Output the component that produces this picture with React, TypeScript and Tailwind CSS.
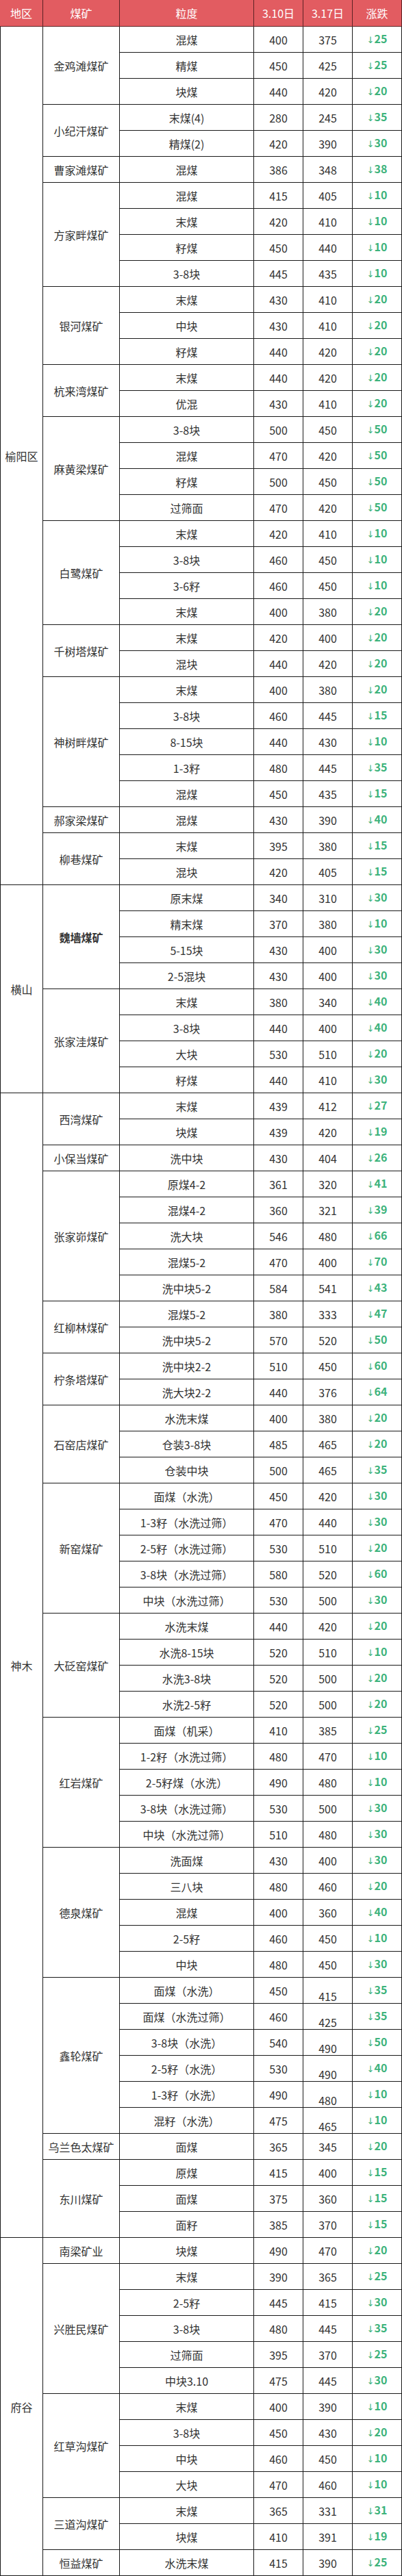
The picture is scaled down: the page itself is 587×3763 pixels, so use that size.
type Row = [string, number, number, number, boolean?];
type Mine = { name: string; bold?: boolean; rows: Row[] };
type Region = { name: string; mines: Mine[] };

const DATA: Region[] = [
  {
    name: "榆阳区",
    mines: [
      { name: "金鸡滩煤矿", rows: [["混煤", 400, 375, 25], ["精煤", 450, 425, 25], ["块煤", 440, 420, 20]] },
      { name: "小纪汗煤矿", rows: [["末煤(4)", 280, 245, 35], ["精煤(2)", 420, 390, 30]] },
      { name: "曹家滩煤矿", rows: [["混煤", 386, 348, 38]] },
      {
        name: "方家畔煤矿",
        rows: [["混煤", 415, 405, 10], ["末煤", 420, 410, 10], ["籽煤", 450, 440, 10], ["3-8块", 445, 435, 10]],
      },
      { name: "银河煤矿", rows: [["末煤", 430, 410, 20], ["中块", 430, 410, 20], ["籽煤", 440, 420, 20]] },
      { name: "杭来湾煤矿", rows: [["末煤", 440, 420, 20], ["优混", 430, 410, 20]] },
      {
        name: "麻黄梁煤矿",
        rows: [["3-8块", 500, 450, 50], ["混煤", 470, 420, 50], ["籽煤", 500, 450, 50], ["过筛面", 470, 420, 50]],
      },
      {
        name: "白鹭煤矿",
        rows: [["末煤", 420, 410, 10], ["3-8块", 460, 450, 10], ["3-6籽", 460, 450, 10], ["末煤", 400, 380, 20]],
      },
      { name: "千树塔煤矿", rows: [["末煤", 420, 400, 20], ["混块", 440, 420, 20]] },
      {
        name: "神树畔煤矿",
        rows: [
          ["末煤", 400, 380, 20],
          ["3-8块", 460, 445, 15],
          ["8-15块", 440, 430, 10],
          ["1-3籽", 480, 445, 35],
          ["混煤", 450, 435, 15],
        ],
      },
      { name: "郝家梁煤矿", rows: [["混煤", 430, 390, 40]] },
      { name: "柳巷煤矿", rows: [["末煤", 395, 380, 15], ["混块", 420, 405, 15]] },
    ],
  },
  {
    name: "横山",
    mines: [
      {
        name: "魏墙煤矿",
        bold: true,
        rows: [["原末煤", 340, 310, 30], ["精末煤", 370, 380, 10], ["5-15块", 430, 400, 30], ["2-5混块", 430, 400, 30]],
      },
      {
        name: "张家洼煤矿",
        rows: [["末煤", 380, 340, 40], ["3-8块", 440, 400, 40], ["大块", 530, 510, 20], ["籽煤", 440, 410, 30]],
      },
    ],
  },
  {
    name: "神木",
    mines: [
      { name: "西湾煤矿", rows: [["末煤", 439, 412, 27], ["块煤", 439, 420, 19]] },
      { name: "小保当煤矿", rows: [["洗中块", 430, 404, 26]] },
      {
        name: "张家峁煤矿",
        rows: [
          ["原煤4-2", 361, 320, 41],
          ["混煤4-2", 360, 321, 39],
          ["洗大块", 546, 480, 66],
          ["混煤5-2", 470, 400, 70],
          ["洗中块5-2", 584, 541, 43],
        ],
      },
      { name: "红柳林煤矿", rows: [["混煤5-2", 380, 333, 47], ["洗中块5-2", 570, 520, 50]] },
      { name: "柠条塔煤矿", rows: [["洗中块2-2", 510, 450, 60], ["洗大块2-2", 440, 376, 64]] },
      { name: "石窑店煤矿", rows: [["水洗末煤", 400, 380, 20], ["仓装3-8块", 485, 465, 20], ["仓装中块", 500, 465, 35]] },
      {
        name: "新窑煤矿",
        rows: [
          ["面煤（水洗）", 450, 420, 30],
          ["1-3籽（水洗过筛）", 470, 440, 30],
          ["2-5籽（水洗过筛）", 530, 510, 20],
          ["3-8块（水洗过筛）", 580, 520, 60],
          ["中块（水洗过筛）", 530, 500, 30],
        ],
      },
      {
        name: "大砭窑煤矿",
        rows: [["水洗末煤", 440, 420, 20], ["水洗8-15块", 520, 510, 10], ["水洗3-8块", 520, 500, 20], ["水洗2-5籽", 520, 500, 20]],
      },
      {
        name: "红岩煤矿",
        rows: [
          ["面煤（机采）", 410, 385, 25],
          ["1-2籽（水洗过筛）", 480, 470, 10],
          ["2-5籽煤（水洗）", 490, 480, 10],
          ["3-8块（水洗过筛）", 530, 500, 30],
          ["中块（水洗过筛）", 510, 480, 30],
        ],
      },
      {
        name: "德泉煤矿",
        rows: [
          ["洗面煤", 430, 400, 30],
          ["三八块", 480, 460, 20],
          ["混煤", 400, 360, 40],
          ["2-5籽", 460, 450, 10],
          ["中块", 480, 450, 30],
        ],
      },
      {
        name: "鑫轮煤矿",
        rows: [
          ["面煤（水洗）", 450, 415, 35, true],
          ["面煤（水洗过筛）", 460, 425, 35, true],
          ["3-8块（水洗）", 540, 490, 50, true],
          ["2-5籽（水洗）", 530, 490, 40, true],
          ["1-3籽（水洗）", 490, 480, 10, true],
          ["混籽（水洗）", 475, 465, 10, true],
        ],
      },
      { name: "乌兰色太煤矿", rows: [["面煤", 365, 345, 20]] },
      { name: "东川煤矿", rows: [["原煤", 415, 400, 15], ["面煤", 375, 360, 15], ["面籽", 385, 370, 15]] },
    ],
  },
  {
    name: "府谷",
    mines: [
      { name: "南梁矿业", rows: [["块煤", 490, 470, 20]] },
      {
        name: "兴胜民煤矿",
        rows: [
          ["末煤", 390, 365, 25],
          ["2-5籽", 445, 415, 30],
          ["3-8块", 480, 445, 35],
          ["过筛面", 395, 370, 25],
          ["中块3.10", 475, 445, 30],
        ],
      },
      {
        name: "红草沟煤矿",
        rows: [["末煤", 400, 390, 10], ["3-8块", 450, 430, 20], ["中块", 460, 450, 10], ["大块", 470, 460, 10]],
      },
      { name: "三道沟煤矿", rows: [["末煤", 365, 331, 31], ["块煤", 410, 391, 19]] },
      { name: "恒益煤矿", rows: [["水洗末煤", 415, 390, 25]] },
    ],
  },
];

const cell = "h-[38px] border-r border-b border-[#1a1a1a] p-0 text-center align-middle";

export default function App() {
  return (
    <div className="w-[587px] bg-white font-['Noto_Sans_CJK_SC',sans-serif] text-[16px] leading-[20px] text-[#333]">
      <table className="w-[587px] table-fixed border-separate border-spacing-0">
        <colgroup>
          <col className="w-[63px]" />
          <col className="w-[112px]" />
          <col className="w-[196px]" />
          <col className="w-[72px]" />
          <col className="w-[72px]" />
          <col className="w-[72px]" />
        </colgroup>
        <thead>
          <tr className="bg-[#e25c61] text-white">
            <th className="h-[39px] border-r border-b border-[#5c2224] p-0 text-center align-middle font-normal">地区</th>
            <th className="h-[39px] border-r border-b border-[#5c2224] p-0 text-center align-middle font-normal">煤矿</th>
            <th className="h-[39px] border-r border-b border-[#5c2224] p-0 text-center align-middle font-normal">粒度</th>
            <th className="h-[39px] border-r border-b border-[#5c2224] p-0 text-center align-middle font-normal">3.10日</th>
            <th className="h-[39px] border-r border-b border-[#5c2224] p-0 text-center align-middle font-normal">3.17日</th>
            <th className="h-[39px] border-r border-b border-[#5c2224] p-0 text-center align-middle font-normal">涨跌</th>
          </tr>
        </thead>
        <tbody>
          {DATA.map((region) => {
            const regionRows = region.mines.reduce((n, m) => n + m.rows.length, 0);
            return region.mines.map((mine, mi) =>
              mine.rows.map((row, ri) => {
                const [grade, before, after, drop, shifted] = row;
                return (
                  <tr key={`${region.name}-${mine.name}-${ri}`}>
                    {mi === 0 && ri === 0 ? (
                      <td rowSpan={regionRows} className={`${cell} border-l`}>
                        {region.name}
                      </td>
                    ) : null}
                    {ri === 0 ? (
                      <td rowSpan={mine.rows.length} className={`${cell} ${mine.bold ? "font-bold" : ""}`}>
                        {mine.name}
                      </td>
                    ) : null}
                    <td className={cell}>{grade}</td>
                    <td className={cell}>{before}</td>
                    <td className={`${cell} ${shifted ? "pt-4" : ""}`}>{after}</td>
                    <td className={`${cell} font-bold text-[#3db37c]`}>
                      <span className="font-['DejaVu_Sans',sans-serif] text-[13px] font-normal">↓</span>
                      {drop}
                    </td>
                  </tr>
                );
              })
            );
          })}
        </tbody>
      </table>
    </div>
  );
}
